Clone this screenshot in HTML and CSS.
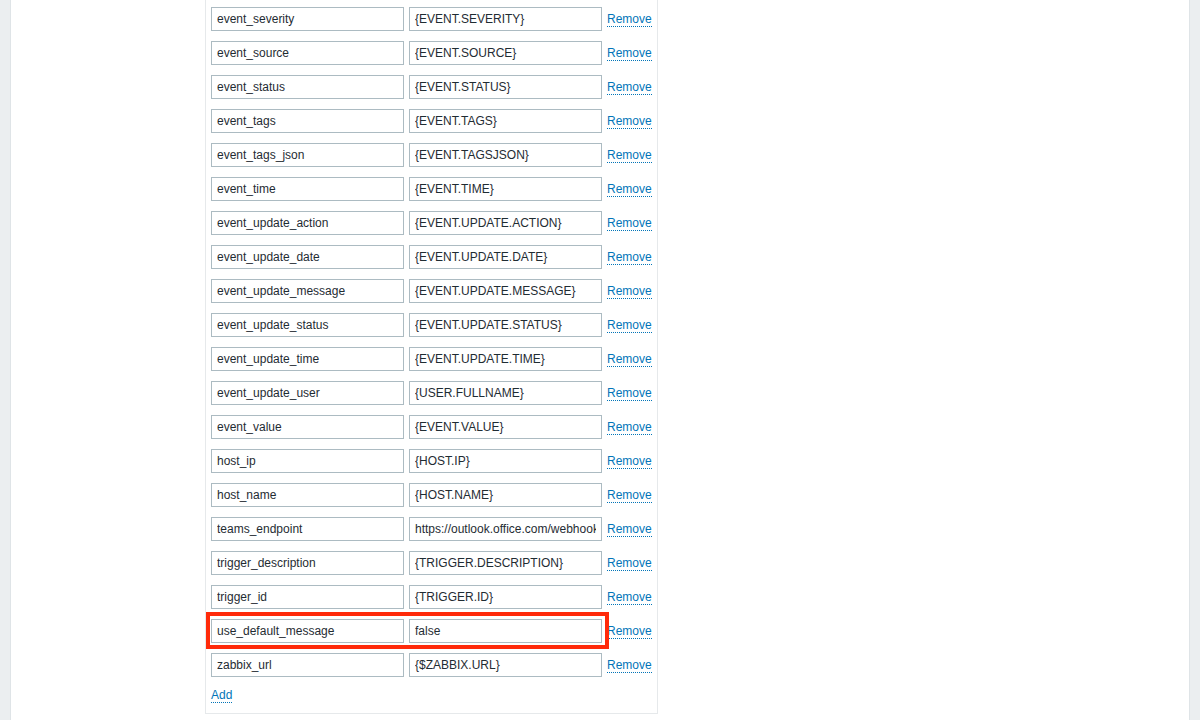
FILE: index.html
```html
<!DOCTYPE html>
<html>
<head>
<meta charset="utf-8">
<link rel="stylesheet" href="styles.css">
</head>
<body>
<div class="page">
  <div class="main">
    <div class="params">
      <div class="row"><input class="in" value="event_severity"><input class="in" value="{EVENT.SEVERITY}"><a class="link">Remove</a></div>
      <div class="row"><input class="in" value="event_source"><input class="in" value="{EVENT.SOURCE}"><a class="link">Remove</a></div>
      <div class="row"><input class="in" value="event_status"><input class="in" value="{EVENT.STATUS}"><a class="link">Remove</a></div>
      <div class="row"><input class="in" value="event_tags"><input class="in" value="{EVENT.TAGS}"><a class="link">Remove</a></div>
      <div class="row"><input class="in" value="event_tags_json"><input class="in" value="{EVENT.TAGSJSON}"><a class="link">Remove</a></div>
      <div class="row"><input class="in" value="event_time"><input class="in" value="{EVENT.TIME}"><a class="link">Remove</a></div>
      <div class="row"><input class="in" value="event_update_action"><input class="in" value="{EVENT.UPDATE.ACTION}"><a class="link">Remove</a></div>
      <div class="row"><input class="in" value="event_update_date"><input class="in" value="{EVENT.UPDATE.DATE}"><a class="link">Remove</a></div>
      <div class="row"><input class="in" value="event_update_message"><input class="in" value="{EVENT.UPDATE.MESSAGE}"><a class="link">Remove</a></div>
      <div class="row"><input class="in" value="event_update_status"><input class="in" value="{EVENT.UPDATE.STATUS}"><a class="link">Remove</a></div>
      <div class="row"><input class="in" value="event_update_time"><input class="in" value="{EVENT.UPDATE.TIME}"><a class="link">Remove</a></div>
      <div class="row"><input class="in" value="event_update_user"><input class="in" value="{USER.FULLNAME}"><a class="link">Remove</a></div>
      <div class="row"><input class="in" value="event_value"><input class="in" value="{EVENT.VALUE}"><a class="link">Remove</a></div>
      <div class="row"><input class="in" value="host_ip"><input class="in" value="{HOST.IP}"><a class="link">Remove</a></div>
      <div class="row"><input class="in" value="host_name"><input class="in" value="{HOST.NAME}"><a class="link">Remove</a></div>
      <div class="row"><input class="in" value="teams_endpoint"><input class="in" value="https://outlook.office.com/webhook/xxxxxxxx"><a class="link">Remove</a></div>
      <div class="row"><input class="in" value="trigger_description"><input class="in" value="{TRIGGER.DESCRIPTION}"><a class="link">Remove</a></div>
      <div class="row"><input class="in" value="trigger_id"><input class="in" value="{TRIGGER.ID}"><a class="link">Remove</a></div>
      <div class="row highlighted"><input class="in" value="use_default_message"><input class="in" value="false"><a class="link">Remove</a><span class="mark"></span></div>
      <div class="row"><input class="in" value="zabbix_url"><input class="in" value="{$ZABBIX.URL}"><a class="link">Remove</a></div>
      <div class="add-row"><a class="link">Add</a></div>
    </div>
  </div>
</div>
</body>
</html>
```
FILE: styles.css
```css
html, body {
  margin: 0;
  padding: 0;
  height: 100%;
}
body {
  font-family: Arial, "Liberation Sans", Helvetica, sans-serif;
  font-size: 12px;
  color: #1f2c33;
  background: #ebeef0;
}
.page {
  height: 720px;
  overflow: hidden;
  padding: 0 10px 0 10px;
}
.main {
  background: #ffffff;
  height: 100%;
  border-left: 1px solid #dfe4e7;
  border-right: 1px solid #dfe4e7;
  padding-left: 194px;
}
.params {
  width: 441px;
  border: 1px solid #e6e9eb;
  border-top: none;
  padding: 7px 5px 7px 5px;
  display: flex;
  flex-direction: column;
  gap: 10px;
}
.row {
  display: flex;
  align-items: center;
  gap: 5px;
  position: relative;
  height: 24px;
}
.in {
  box-sizing: border-box;
  flex: 0 0 193px;
  width: 193px;
  height: 24px;
  margin: 0;
  border: 1px solid #acbbc2;
  background: #ffffff;
  padding: 0 5px;
  font-family: Arial, "Liberation Sans", Helvetica, sans-serif;
  font-size: 12px;
  color: #1f2c33;
  outline: none;
}
.link {
  color: #0275b8;
  text-decoration: none;
  border-bottom: 1px dotted #0275b8;
  line-height: 13px;
  cursor: pointer;
  flex: 0 0 auto;
}
.row .link {
  margin-top: 1px;
}
.add-row {
  height: 17px;
  display: flex;
  align-items: flex-start;
  padding-top: 2px;
}
.mark {
  position: absolute;
  left: -5px;
  top: -7px;
  width: 403px;
  height: 37px;
  border: 4px solid #ff2a0a;
  box-sizing: border-box;
  pointer-events: none;
}
```
